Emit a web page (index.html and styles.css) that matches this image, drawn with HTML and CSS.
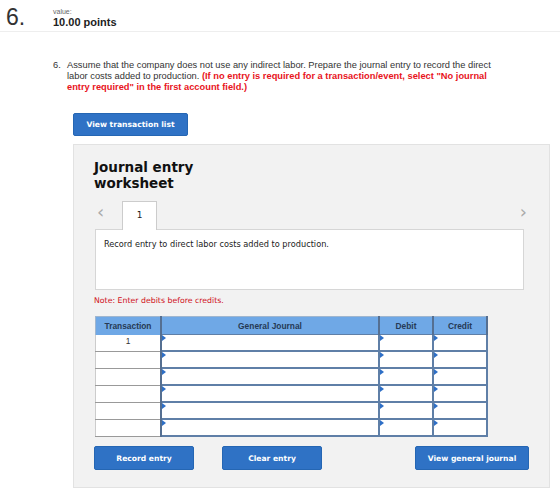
FILE: index.html
```html
<!DOCTYPE html>
<html lang="en">
<head>
    <meta charset="UTF-8">
    <title>Question 6</title>
    <link rel="stylesheet" href="styles.css">
</head>
<body>
    <div class="header">
        <div class="qnum">6.</div>
        <div class="meta">
            <div class="value-label">value:</div>
            <div class="points">10.00 points</div>
        </div>
    </div>

    <div class="question">
        <span class="qn">6.</span>
        <p>Assume that the company does not use any indirect labor. Prepare the journal entry to record the direct labor costs added to production. <b class="warn">(If no entry is required for a transaction/event, select "No journal entry required" in the first account field.)</b></p>
    </div>

    <button class="btn btn-list">View transaction list</button>

    <div class="worksheet">
        <h2>Journal entry<br>worksheet</h2>

        <div class="tabs">
            <span class="arrow">&lsaquo;</span>
            <div class="tab">1</div>
            <span class="arrow arrow-right">&rsaquo;</span>
        </div>
        <div class="entry-box">Record entry to direct labor costs added to production.</div>

        <div class="note">Note: Enter debits before credits.</div>

        <table class="journal">
            <thead>
                <tr>
                    <th class="c-trans">Transaction</th>
                    <th class="c-gj">General Journal</th>
                    <th class="c-num">Debit</th>
                    <th class="c-num">Credit</th>
                </tr>
            </thead>
            <tbody id="rows"></tbody>
        </table>

        <div class="actions">
            <button class="btn btn-record">Record entry</button>
            <button class="btn btn-clear">Clear entry</button>
            <button class="btn btn-view">View general journal</button>
        </div>
    </div>

    <script>
        const rows = document.getElementById('rows');
        for (let i = 0; i < 6; i++) {
            const tr = document.createElement('tr');
            tr.innerHTML = `
                <td class="c-trans">${i === 0 ? '1' : ''}</td>
                <td class="cell"><span class="flag"></span></td>
                <td class="cell"><span class="flag"></span></td>
                <td class="cell"><span class="flag"></span></td>
            `;
            rows.appendChild(tr);
        }
    </script>
</body>
</html>
```

FILE: styles.css
```css
body {
    margin: 0;
    font-family: "Liberation Sans", Arial, sans-serif;
    color: #222;
    background: #fff;
}

.header {
    display: flex;
    height: 32px;
    border-bottom: 1px solid #eee;
    box-sizing: border-box;
}

.qnum {
    width: 53px;
    padding: 4px 0 0 6px;
    box-sizing: border-box;
    font-size: 23px;
    color: #333;
}

.meta {
    padding-top: 8px;
}

.value-label {
    font-size: 7px;
    color: #666;
    line-height: 8px;
}

.points {
    font-size: 11px;
    font-weight: bold;
    color: #222;
    line-height: 13px;
}

.question {
    display: flex;
    margin: 28px 0 0 53px;
    font-size: 9.3px;
    line-height: 11px;
    color: #333;
}

.qn {
    width: 14px;
    flex: none;
}

.question p {
    margin: 0;
    width: 426px;
}

.warn {
    color: #e8141c;
}

.btn {
    display: block;
    border: 1px solid #2566b3;
    border-radius: 2px;
    background: #2f72c5;
    color: #fff;
    font-family: "DejaVu Sans", Verdana, sans-serif;
    font-weight: bold;
    font-size: 7.6px;
    cursor: pointer;
}

.btn-list {
    margin: 20px 0 0 73px;
    width: 115px;
    height: 23px;
}

.worksheet {
    margin: 8px 0 0 73px;
    width: 477px;
    height: 344px;
    box-sizing: border-box;
    background: #f2f2f2;
    border: 1px solid #e2e2e2;
    padding: 0 20px 0 20px;
    font-family: "DejaVu Sans", Verdana, sans-serif;
}

.worksheet h2 {
    margin: 14px 0 0 0;
    font-size: 13.5px;
    line-height: 16px;
    font-weight: bold;
    color: #111;
}

.tabs {
    display: flex;
    align-items: flex-end;
    margin-top: 9px;
    height: 29px;
}

.arrow {
    font-size: 18px;
    color: #aaa;
    width: 25px;
    padding-left: 3px;
    align-self: center;
    line-height: 18px;
    margin-top: -6px;
}

.arrow-right {
    margin-left: auto;
    width: auto;
    padding: 0 2px 0 0;
}

.tab {
    width: 35px;
    height: 29px;
    box-sizing: border-box;
    background: #fff;
    border: 1px solid #ccc;
    border-bottom: none;
    text-align: center;
    font-size: 9px;
    line-height: 26px;
    color: #222;
    position: relative;
    top: 1px;
}

.entry-box {
    width: 429px;
    height: 61px;
    box-sizing: border-box;
    margin-left: 1px;
    background: #fff;
    border: 1px solid #d6d6d6;
    padding: 9px 0 0 8px;
    font-size: 8.2px;
    color: #222;
}

.note {
    margin-top: 6px;
    font-size: 7.8px;
    color: #d0101a;
}

.journal {
    margin: 11px 0 0 1px;
    border-collapse: collapse;
    width: 393px;
    font-family: "Liberation Sans", Arial, sans-serif;
    font-size: 8.4px;
}

.journal th {
    height: 17px;
    padding: 0;
    background: #6fa8e6;
    color: #263a55;
    font-weight: bold;
    border-top: 1px solid #9fb6cf;
    border-left: 2px solid #556f91;
    border-right: 2px solid #556f91;
}

.journal th.c-trans {
    border-left: 1px solid #9fb6cf;
}

.c-trans {
    width: 64px;
}

.c-num {
    width: 52px;
}

.journal td {
    height: 15px;
    padding: 0;
    background: #fff;
}

.journal td.c-trans {
    text-align: center;
    color: #333;
    border-bottom: 1px solid #999;
    border-left: 1px solid #ccc;
    border-right: 2px solid #556f91;
    vertical-align: top;
    padding-top: 1px;
}

.journal td.cell {
    border: 2px solid #5f7fa7;
    border-top-width: 1px;
    vertical-align: top;
}

.flag {
    display: block;
    width: 0;
    height: 0;
    border-top: 3px solid transparent;
    border-bottom: 3px solid transparent;
    border-left: 4px solid #2e6fc6;
}

.actions {
    display: flex;
    margin-top: 9px;
}

.btn-record,
.btn-clear {
    width: 100px;
    height: 24px;
    margin-right: 28px;
}

.btn-view {
    width: 114px;
    height: 24px;
    margin-left: auto;
}
```
